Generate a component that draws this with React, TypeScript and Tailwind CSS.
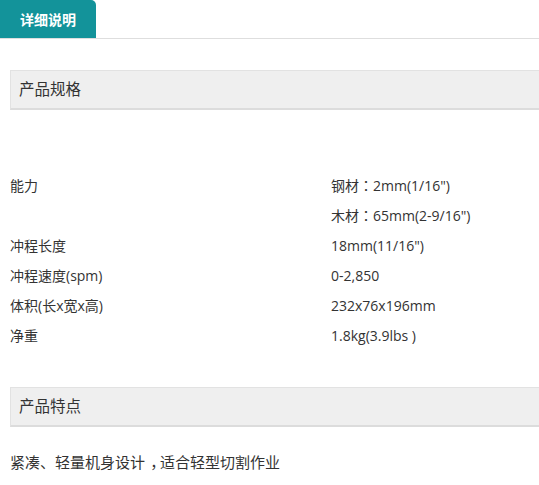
import React from "react";

const P: React.FC<{ children: React.ReactNode }> = ({ children }) => (
  <span lang="zh-TW" style={{ fontFamily: '"Noto Sans CJK TC", sans-serif' }}>
    {children}
  </span>
);

const specs: { label: string; values: React.ReactNode[] }[] = [
  {
    label: "能力",
    values: [
      <>钢材<P>：</P>2mm(1/16")</>,
      <>木材<P>：</P>65mm(2-9/16")</>,
    ],
  },
  { label: "冲程长度", values: ["18mm(11/16\")"] },
  { label: "冲程速度(spm)", values: ["0-2,850"] },
  { label: "体积(长x宽x高)", values: ["232x76x196mm"] },
  { label: "净重", values: ["1.8kg(3.9lbs )"] },
];

const SectionHeader: React.FC<{ title: string }> = ({ title }) => (
  <div className="ml-[10px] h-[40px] flex items-center pl-[8px] bg-[#efefef] border border-[#e2e2e2] border-b-2 border-b-[#dcdcdc] border-r-0 text-[15.5px] text-[#333]">
    {title}
  </div>
);

export default function App() {
  return (
    <div
      className="w-[539px] h-[485px] bg-white overflow-hidden text-[#333]"
      style={{ fontFamily: '"Open Sans", "Noto Sans CJK SC", sans-serif' }}
    >
      <div className="flex border-b border-[#dedede]">
        <div className="w-[96px] h-[38px] flex items-center pl-[20px] bg-[#13939a] rounded-tr-[5px] text-white text-[14px] font-bold">
          详细说明
        </div>
      </div>

      <div className="mt-[31px]">
        <SectionHeader title="产品规格" />
      </div>

      <div className="mt-[60px] text-[14px]">
        {specs.map((row) => (
          <div key={row.label} className="flex">
            <div className="w-[331px] pl-[10px] h-[30px] flex items-center">{row.label}</div>
            <div className="flex flex-col">
              {row.values.map((v, i) => (
                <div key={i} className="h-[30px] flex items-center">
                  {v}
                </div>
              ))}
            </div>
          </div>
        ))}
      </div>

      <div className="mt-[37px]">
        <SectionHeader title="产品特点" />
      </div>

      <div className="pl-[10px] mt-[24px] text-[15px]">
        紧凑、轻量机身设计<span className="inline-block w-[1em] translate-x-[0.35em]">，</span>适合轻型切割作业
      </div>
    </div>
  );
}
